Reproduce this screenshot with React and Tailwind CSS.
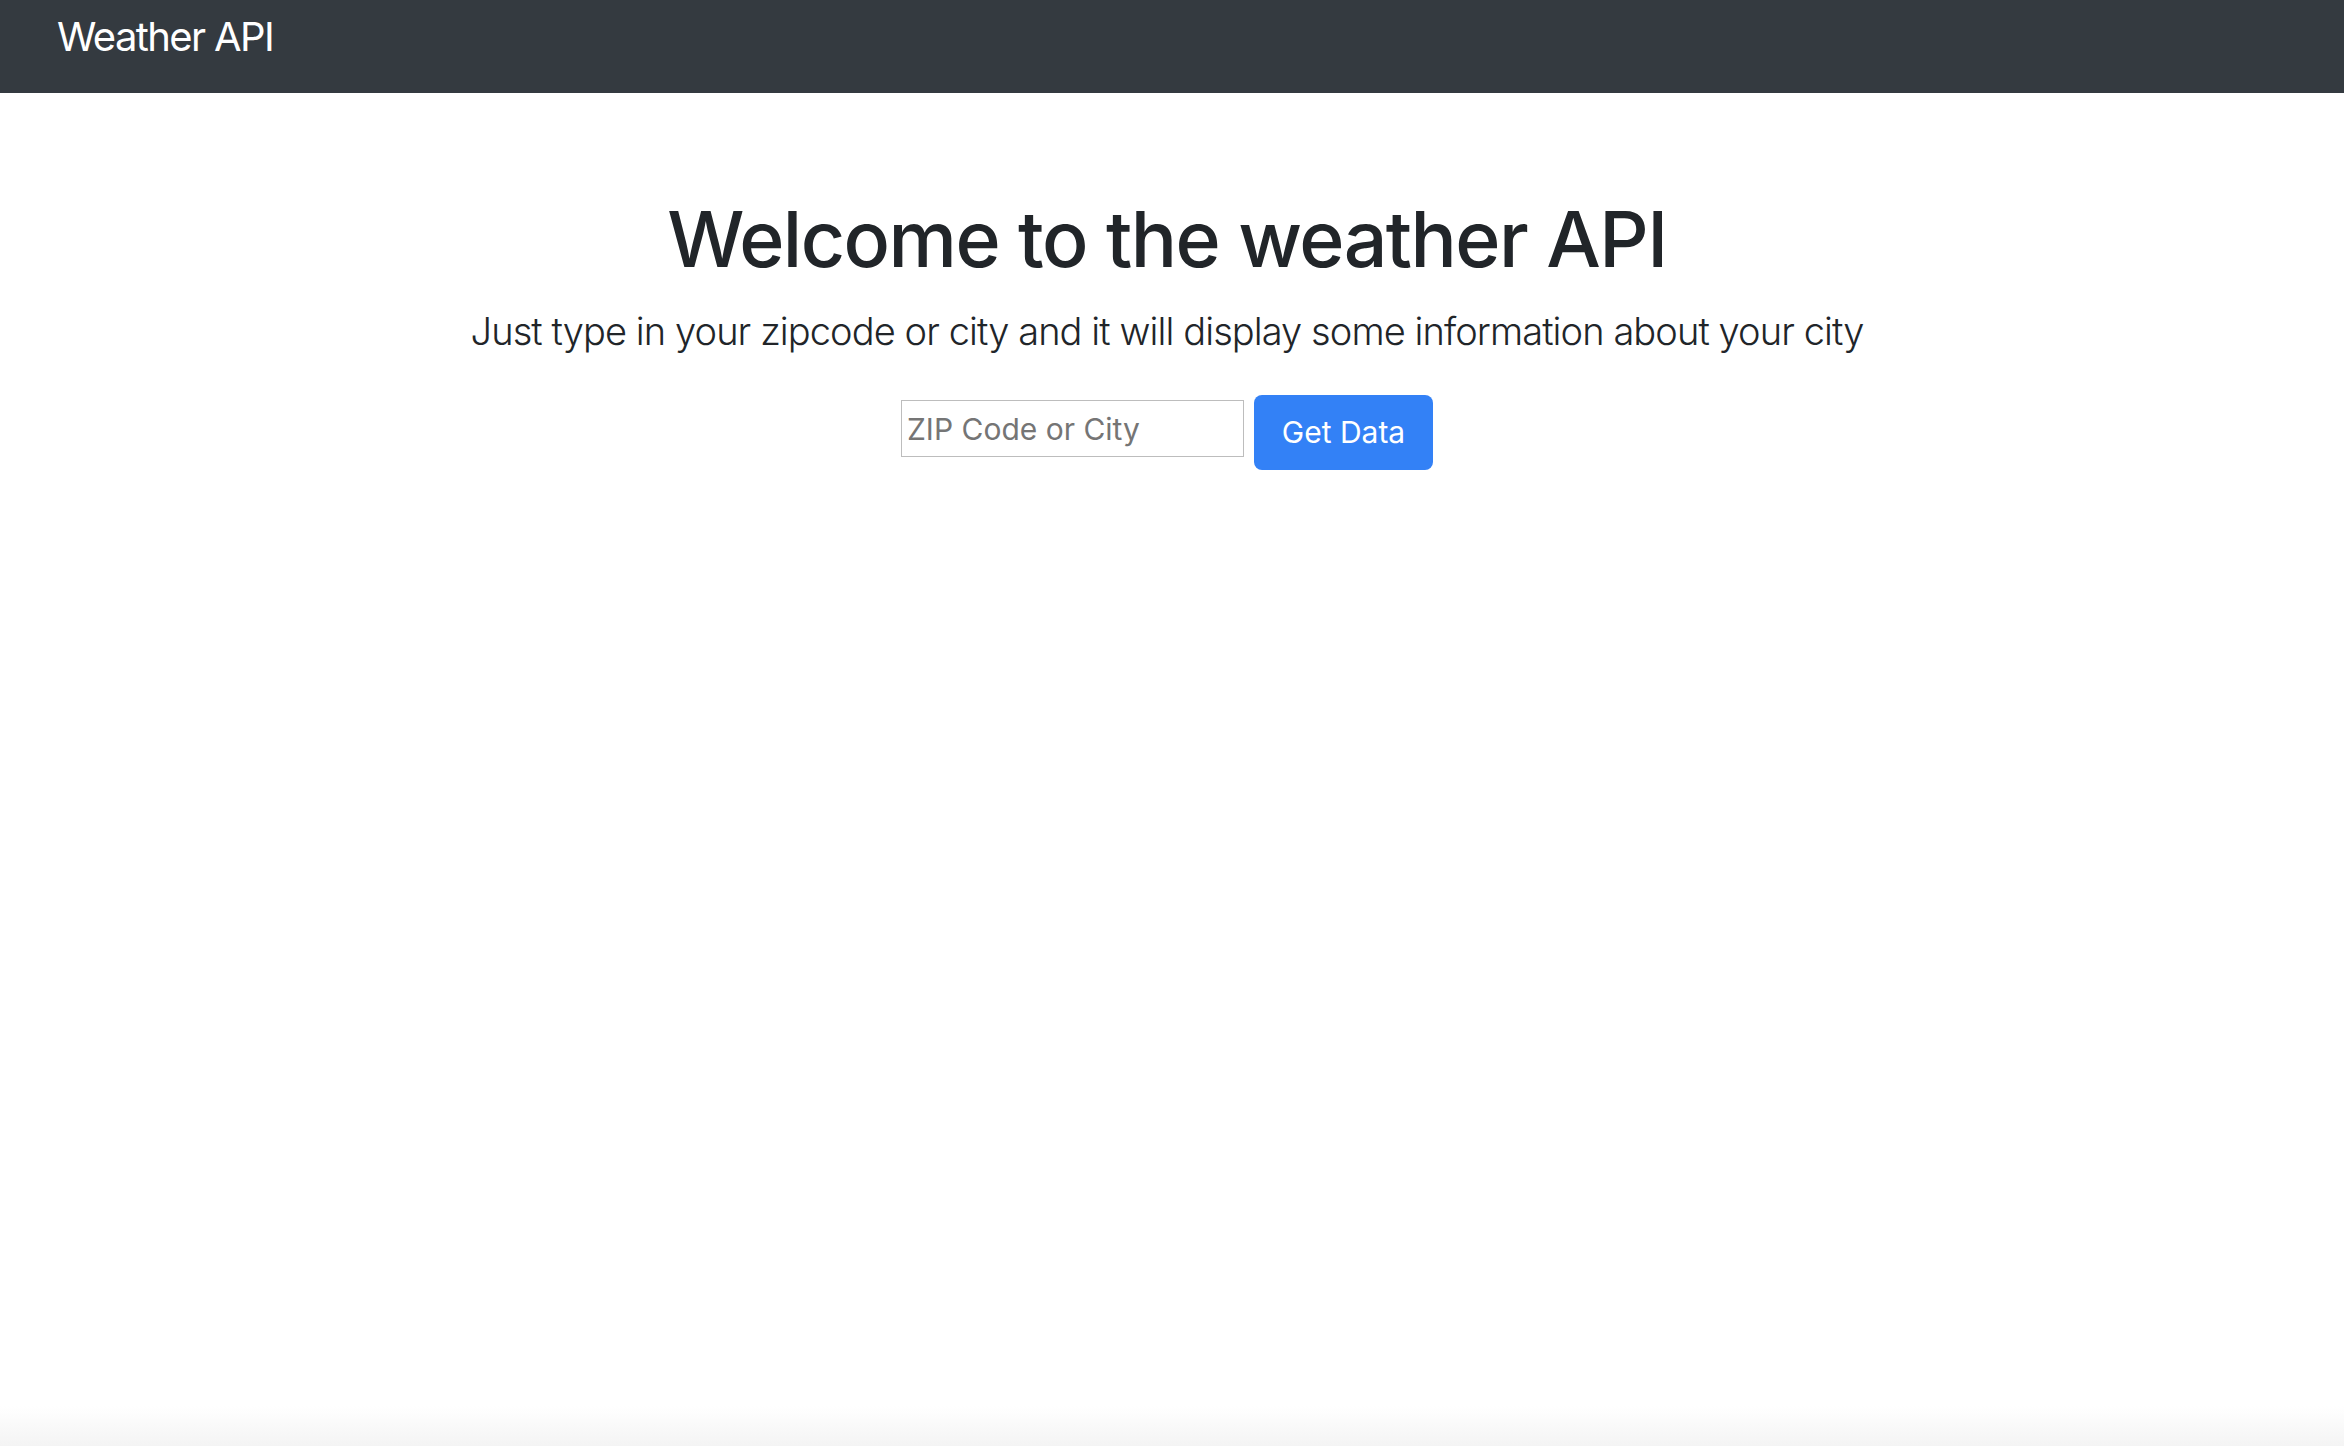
import React, { useState } from 'react';

const font = { fontFamily: 'Inter, "Helvetica Neue", Arial, sans-serif' };

function Navbar() {
  return (
    <nav className="h-[93px] bg-[#343a40] pl-[57px] pt-[7px]">
      <span className="text-[40px] leading-[60px] tracking-[-0.04em] text-white">Weather API</span>
    </nav>
  );
}

export default function App() {
  const [query, setQuery] = useState('');

  return (
    <div className="min-h-screen flex flex-col bg-white" style={font}>
      <Navbar />

      <main className="flex-1 flex flex-col items-center pr-[10px] pt-[99px]">
        <h1 className="text-[77px] leading-[94px] tracking-[-0.02em] font-medium text-[#212529]">Welcome to the weather API</h1>
        <p className="mt-[15px] text-[38px] leading-[60px] tracking-[-0.024em] font-light text-[#212529]">
          Just type in your zipcode or city and it will display some information about your city
        </p>

        <div className="mt-[34px] flex items-start gap-[10px]">
          <input
            value={query}
            onChange={(e) => setQuery(e.target.value)}
            placeholder="ZIP Code or City"
            className="mt-[5px] w-[343px] h-[57px] border border-[#bdbdbd] px-[5px] text-[30px] text-[#212529] placeholder:text-[#757575] outline-none"
          />
          <button className="w-[179px] h-[75px] rounded-[8px] bg-[#3381f6] text-[30px] text-white">Get Data</button>
        </div>
      </main>

      <div className="h-[40px] bg-gradient-to-b from-white to-[#f4f4f4]" />
    </div>
  );
}
